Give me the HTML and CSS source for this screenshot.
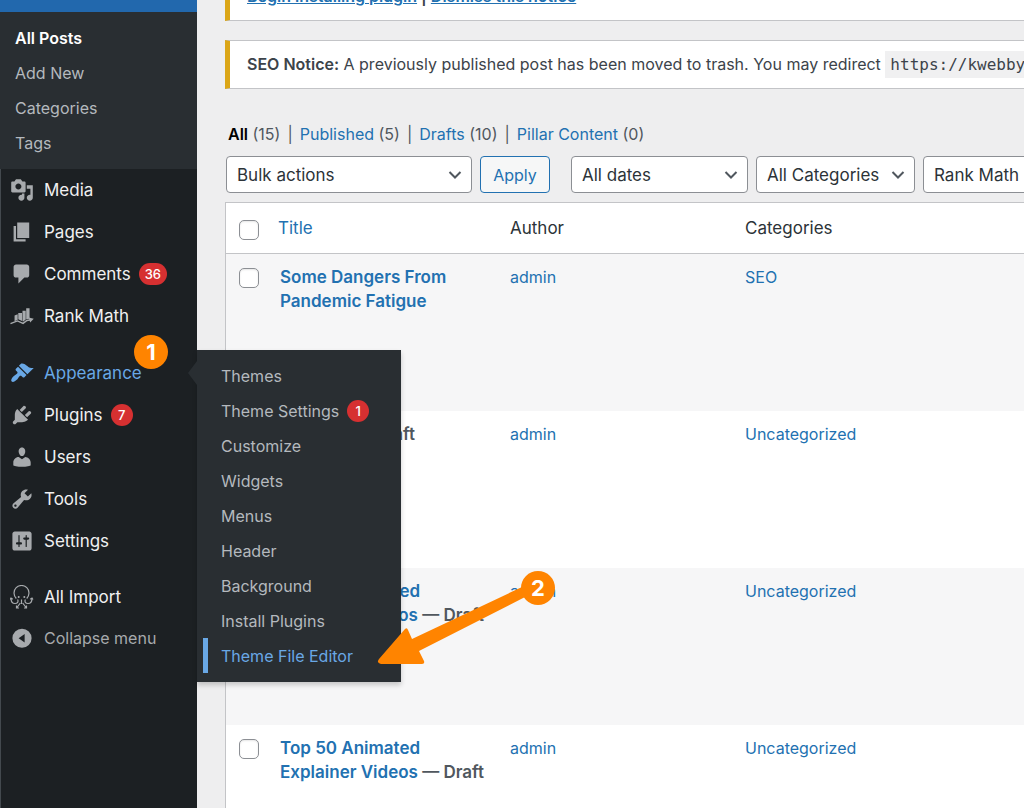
FILE: index.html
```
<!DOCTYPE html>
<html lang="en">
<head>
<meta charset="utf-8">
<title>Posts</title>
<link rel="stylesheet" href="styles.css">
</head>
<body>
<div class="admin">
  <nav class="sidebar" aria-label="Main menu">
    <div class="current-bar"></div>
    <ul class="submenu">
      <li><a class="current" href="#">All Posts</a></li>
      <li><a href="#">Add New</a></li>
      <li><a href="#">Categories</a></li>
      <li><a href="#">Tags</a></li>
    </ul>
    <ul class="menu">
      <li><a href="#"><svg class="icon" viewBox="0 0 20 20"><path d="M13 11V4c0-.55-.45-1-1-1h-1.67L9 1H5L3.67 3H2c-.55 0-1 .45-1 1v7c0 .55.45 1 1 1h10c.55 0 1-.45 1-1zM7 4.5c1.38 0 2.5 1.12 2.5 2.5S8.38 9.5 7 9.5 4.5 8.38 4.5 7 5.62 4.5 7 4.5zM14 6h5v10.5c0 1.38-1.12 2.5-2.5 2.5S14 17.88 14 16.5s1.12-2.5 2.5-2.5c.17 0 .34.02.5.05V9h-3V6zm-4 8.05V13h2v3.5c0 1.38-1.12 2.5-2.5 2.5S7 17.88 7 16.5 8.12 14 9.5 14c.17 0 .34.02.5.05z"/></svg>Media</a></li>
      <li><a href="#"><svg class="icon" viewBox="0 0 20 20"><path d="M6 15V2h10v13H6zm-1 1h8v2H3V5h2v11z"/></svg>Pages</a></li>
      <li><a href="#"><svg class="icon" viewBox="0 0 20 20"><path d="M5 2h9c1.1 0 2 .9 2 2v7c0 1.1-.9 2-2 2h-2l-5 5v-5H5c-1.1 0-2-.9-2-2V4c0-1.1.9-2 2-2z"/></svg>Comments <span class="count">36</span></a></li>
      <li><a href="#"><svg class="icon" viewBox="0 0 20 20"><path d="M3.800 9.500l2.600-.9v4.500l-2.600 1.200zM6.900 7.500H10v6.600l-3.100-1.300zM10.400 5.600h2.700v7.300l-2 1.700-.7-.3zM13.500 3.600h2.800v8.600l-2.800.5z"/><path class="line" d="M.4 16.400l5.800-2.300 4.700 2 3.200-2.400 3.400-.6"/><path d="M15.600 11.300l4.200.9-3 3.200z"/></svg>Rank Math</a></li>
      <li class="open">
        <a href="#"><svg class="icon" viewBox="0 0 20 20"><path d="M14.480 11.060L7.410 3.990l1.500-1.500c.5-.56 2.300-.47 3.510.32 1.210.8 1.430 1.280 2.910 2.100 1.180.64 2.450 1.260 4.450.85zm-.71.71L6.700 4.700 4.930 6.470c-.39.39-.39 1.020 0 1.410l1.060 1.060c.39.39.39 1.030 0 1.420-.6.6-1.430 1.110-2.210 1.690-.35.26-.7.53-1.010.84C1.430 14.230.4 16.080 1.400 17.070c.99 1 2.840-.03 4.180-1.360.31-.31.58-.66.85-1.020.57-.78 1.080-1.610 1.690-2.210.39-.39 1.020-.39 1.410 0l1.060 1.060c.39.39 1.020.39 1.410 0z"/></svg>Appearance</a>
        <span class="step step-one">1</span>
        <ul class="flyout">
          <li><a href="#">Themes</a></li>
          <li><a href="#">Theme Settings <span class="count">1</span></a></li>
          <li><a href="#">Customize</a></li>
          <li><a href="#">Widgets</a></li>
          <li><a href="#">Menus</a></li>
          <li><a href="#">Header</a></li>
          <li><a href="#">Background</a></li>
          <li><a href="#">Install Plugins</a></li>
          <li class="active"><a href="#">Theme File Editor</a>
            <svg class="arrow" viewBox="0 0 160 84"><path d="M6 75L32 45Q34 43 35 46L39 55L149 3L154 12L46 67L51 77Q52 80 49 80L8 80Q3 79 6 75z"/></svg>
            <span class="step step-two">2</span>
          </li>
        </ul>
      </li>
      <li><a href="#"><svg class="icon" viewBox="0 0 20 20"><path d="M13.110 4.360L9.870 7.600 8 5.730l3.240-3.240c.35-.34 1.050-.2 1.560.32.52.51.66 1.210.31 1.550zm-8 1.770l.91-1.120 9.010 9.010-1.190.84c-.71.71-2.630 1.160-3.820 1.160H6.140L4.900 17.260c-.59.59-1.540.59-2.120 0-.59-.58-.59-1.530 0-2.120l1.240-1.240v-3.880c0-1.130.4-3.190 1.090-3.890zm7.260 3.970l3.240-3.240c.34-.35 1.040-.21 1.550.31.52.51.66 1.210.31 1.550l-3.240 3.250z"/></svg>Plugins <span class="count">7</span></a></li>
      <li><a href="#"><svg class="icon" viewBox="0 0 20 20"><path d="M10 9.250c-2.270 0-2.730-3.440-2.730-3.440C7 4.020 7.820 2 9.970 2c2.160 0 2.980 2.020 2.710 3.810 0 0-.41 3.440-2.680 3.440zm0 2.570L12.720 10c2.390 0 4.520 2.330 4.520 4.530v2.490s-3.650 1.130-7.240 1.130c-3.650 0-7.240-1.130-7.240-1.130v-2.490c0-2.250 1.940-4.480 4.470-4.480z"/></svg>Users</a></li>
      <li><a href="#"><svg class="icon" viewBox="0 0 20 20"><path d="M16.680 9.770c-1.340 1.340-3.300 1.670-4.950.99l-5.410 6.520c-.99.99-2.590.99-3.580 0s-.99-2.590 0-3.570l6.520-5.420c-.68-1.650-.35-3.610.99-4.950 1.280-1.280 3.120-1.620 4.720-1.060l-2.890 2.890 2.820 2.820 2.860-2.870c.53 1.580.18 3.390-1.080 4.650zM3.810 16.210c.4.39 1.040.39 1.430 0 .4-.4.4-1.040 0-1.430-.39-.4-1.030-.4-1.430 0-.39.39-.39 1.030 0 1.430z"/></svg>Tools</a></li>
      <li><a href="#"><svg class="icon" viewBox="0 0 20 20"><path d="M18 16V4c0-1.100-.9-2-2-2H4c-1.100 0-2 .9-2 2v12c0 1.100.9 2 2 2h12c1.100 0 2-.9 2-2zM8 11h1c.55 0 1 .45 1 1s-.45 1-1 1H8v1.500c0 .28-.22.5-.5.5s-.5-.22-.5-.5V13H6c-.55 0-1-.45-1-1s.45-1 1-1h1V5.500c0-.28.22-.5.5-.5s.5.22.5.5V11zm5-2h-1c-.55 0-1-.45-1-1s.45-1 1-1h1V5.500c0-.28.22-.5.5-.5s.5.22.5.5V7h1c.55 0 1 .45 1 1s-.45 1-1 1h-1v5.500c0 .28-.22.5-.5.5s-.5-.22-.5-.5V9z"/></svg>Settings</a></li>
      <li class="group"><a href="#"><svg class="icon" viewBox="0 0 24 24"><path class="line" d="M6.300 13.500C4.500 11.500 4 9.600 4 8a7.500 7.500 0 0 1 15 0c0 1.600-.5 3.500-2.300 5.500M1 13.200c0 3.500 1.500 5.300 4 5.300s3.700-1.800 2.600-4M22 13.200c0 3.500-1.500 5.300-4 5.300s-3.700-1.800-2.600-4M11.500 14.500v4.500M10.300 18L7 22.500M12.700 18l3.300 4.500M6.500 20.500v2.500h2.500M16.500 20.500v2.500H14M0 14.500l1-1.500 1.800 1.200M23 14.500l-1-1.500-1.800 1.200"/><circle cx="8.700" cy="12" r="1"/><circle cx="14.300" cy="12" r="1"/></svg>All Import</a></li>
      <li><button class="collapse" type="button"><svg class="icon" viewBox="0 0 20 20"><path fill-rule="evenodd" d="M10 2.200a8 8 0 1 0 0 16 8 8 0 0 0 0-16zM12.200 6.600v7.200l-5-3.600z"/></svg>Collapse menu</button></li>
    </ul>
  </nav>

  <main class="content">
    <div class="notice"><p><strong><a href="#">Begin installing plugin</a> | <a href="#">Dismiss this notice</a></strong></p></div>
    <div class="notice"><p><strong>SEO Notice:</strong> A previously published post has been moved to trash. You may redirect <code>https://kwebby.com</code></p></div>

    <ul class="views">
      <li><a class="current" href="#">All</a> (15)</li>
      <li><a href="#">Published</a> (5)</li>
      <li><a href="#">Drafts</a> (10)</li>
      <li><a href="#">Pillar Content</a> (0)</li>
    </ul>

    <form class="filters">
      <div class="actions">
        <select class="bulk" aria-label="Bulk actions"><option>Bulk actions</option></select>
        <button class="apply" type="button">Apply</button>
      </div>
      <div class="actions">
        <select class="dates" aria-label="Filter by date"><option>All dates</option></select>
        <select class="cats" aria-label="Filter by category"><option>All Categories</option></select>
        <select class="rank" aria-label="Filter by Rank Math"><option>Rank Math</option></select>
      </div>
    </form>

    <table class="posts">
      <thead>
        <tr><th class="check"><input type="checkbox" aria-label="Select all"></th><th class="title"><a href="#">Title</a></th><th class="author">Author</th><th>Categories</th></tr>
      </thead>
      <tbody>
        <tr><td><input type="checkbox" aria-label="Select Some Dangers From Pandemic Fatigue"></td><td class="name"><a href="#">Some Dangers From Pandemic Fatigue</a></td><td><a href="#">admin</a></td><td><a href="#">SEO</a></td></tr>
        <tr><td><input type="checkbox" aria-label="Select (no title)"></td><td class="name"><a href="#">(no title)</a> — Draft</td><td><a href="#">admin</a></td><td><a href="#">Uncategorized</a></td></tr>
        <tr><td><input type="checkbox" aria-label="Select Top 50 Animated Explainer Videos"></td><td class="name"><a href="#">Top 50 Animated Explainer Videos</a> — Draft</td><td><a href="#">admin</a></td><td><a href="#">Uncategorized</a></td></tr>
        <tr><td><input type="checkbox" aria-label="Select Top 50 Animated Explainer Videos"></td><td class="name"><a href="#">Top 50 Animated Explainer Videos</a> — Draft</td><td><a href="#">admin</a></td><td><a href="#">Uncategorized</a></td></tr>
      </tbody>
    </table>
  </main>
</div>
</body>
</html>
```
FILE: styles.css
```
* { box-sizing: border-box; }
body {
  margin: 0;
  height: 100vh;
  overflow: hidden;
  background: #eeeeef;
  color: #3c434a;
  font: 16px/24px Inter, "Liberation Sans", sans-serif;
}
ul { list-style: none; margin: 0; padding: 0; }
a { color: #2271b1; text-decoration: none; }

.admin { display: flex; height: 100vh; }

/* Sidebar */
.sidebar {
  position: relative;
  z-index: 2;
  flex: 0 0 197px;
  background: #1c2023;
  box-shadow: inset 1px 0 #43494e;
}
.current-bar { height: 12px; background: #2268ad; }
.submenu { padding: 8px 0 9px; background: #292e32; }
.submenu a, .flyout a {
  display: flex;
  align-items: center;
  height: 35px;
  color: #b4b9be;
  font-size: 16px;
}
.submenu a { padding-left: 15px; }
.submenu .current { color: #fff; font-weight: 600; }
.menu > li > a, .collapse {
  display: flex;
  align-items: center;
  width: 100%;
  height: 42px;
  padding: 0 0 0 10px;
  color: #f0f0f1;
  font-size: 17px;
}
.icon { flex: none; width: 24px; height: 24px; margin-right: 10px; fill: #a7aaad; }
.line { fill: none; stroke: #a7aaad; stroke-width: 1.2; }
.group { margin-top: 14px; }
.menu .collapse { height: 40px; border: 0; background: none; color: #a7aaad; font-family: inherit; font-size: 16px; }
.count {
  min-width: 22px;
  height: 22px;
  margin-left: 8px;
  padding: 0 6px;
  border-radius: 11px;
  background: #d63031;
  color: #fff;
  font-size: 13px;
  font-weight: 500;
  line-height: 22px;
  text-align: center;
}

/* Flyout */
.open { position: relative; margin-top: 15px; }
.menu > .open > a { color: #69a8e6; }
.open > a .icon { fill: #69a8e6; }
.open::after {
  content: "";
  position: absolute;
  top: 9px;
  right: 0;
  border: 12px solid transparent;
  border-left: 0;
  border-right: 9px solid #292e32;
}
.flyout {
  position: absolute;
  top: -2px;
  left: 100%;
  width: 204px;
  padding: 8px 0 9px;
  background: #292e32;
  box-shadow: 0 3px 5px rgba(0, 0, 0, .2);
}
.flyout a { padding-left: 24px; }
.flyout .active { position: relative; }
.flyout .active a {
  margin-left: 6px;
  padding-left: 13px;
  border-left: 5px solid #69a8e6;
  color: #69a8e6;
}

/* Numbered walkthrough markers */
.step {
  position: absolute;
  z-index: 3;
  width: 34px;
  height: 34px;
  border-radius: 50%;
  background: #ff8400;
  color: #fff;
  font-size: 22px;
  font-weight: 700;
  line-height: 34px;
  text-align: center;
}
.step-one { top: -17px; left: 134px; }
.step-two { top: -67px; left: 324px; }
.arrow {
  position: absolute;
  top: -54px;
  left: 176px;
  width: 160px;
  height: 84px;
  fill: #ff8400;
}

/* Content */
.content { flex: 1; min-width: 0; margin-top: -28px; padding-left: 28px; overflow: hidden; }
.notice {
  height: 49px;
  margin-bottom: 19px;
  padding: 0 17px;
  border: 1px solid #c3c4c7;
  border-left: 5px solid #dba617;
  border-right: 0;
  background: #fff;
  white-space: nowrap;
}
.notice p { margin: 0; line-height: 47px; }
.notice a { text-decoration: underline; }
strong { font-weight: 600; }
code { padding: 4px 5px; background: #f0f0f1; font: 16px "DejaVu Sans Mono", monospace; }

.views { display: flex; margin-top: 33px; padding-left: 3px; color: #50575e; }
.views li + li::before { content: "|"; padding: 0 7px; }
.views .current { color: #000; font-weight: 600; }

.filters { display: flex; gap: 21px; margin-top: 10px; padding-left: 1px; }
.actions { display: flex; flex: none; gap: 8px; }
select, .apply {
  height: 37px;
  border: 1px solid #8c8f94;
  border-radius: 4px;
  font: inherit;
}
select {
  appearance: none;
  padding: 0 32px 0 10px;
  color: #2c3338;
  font-size: 17px;
  background: #fff url("data:image/svg+xml,%3Csvg xmlns='http://www.w3.org/2000/svg' width='14' height='10'%3E%3Cpath d='M1.500 2l5.500 5.500L12.500 2' fill='none' stroke='%2350575e' stroke-width='2'/%3E%3C/svg%3E") no-repeat right 9px center;
}
.bulk { width: 246px; }
.dates { width: 177px; }
.cats { width: 159px; }
.rank { width: 200px; }
.apply { width: 70px; padding: 0; border-color: #2271b1; background: #f6f7f7; color: #2271b1; }

.posts {
  width: 100%;
  margin-top: 9px;
  border: 1px solid #c3c4c7;
  border-right: 0;
  border-spacing: 0;
  table-layout: fixed;
  background: #fff;
}
th, td { padding: 0; text-align: left; font-weight: 400; }
th { height: 51px; border-bottom: 1px solid #c3c4c7; color: #2c3338; font-size: 17px; }
td { height: 157px; padding-top: 11px; vertical-align: top; }
.check { width: 52px; }
.title { width: 232px; }
.author { width: 235px; }
tbody tr:nth-child(odd) { background: #f6f6f7; }
.name { padding-left: 2px; padding-right: 20px; color: #50575e; font-size: 17px; font-weight: 600; }
input[type="checkbox"] {
  appearance: none;
  display: block;
  width: 20px;
  height: 20px;
  margin: 3px 0 0 13px;
  border: 1px solid #8c8f94;
  border-radius: 5px;
  background: #fff;
  box-shadow: inset 0 1px 2px rgba(0, 0, 0, .1);
}
```
